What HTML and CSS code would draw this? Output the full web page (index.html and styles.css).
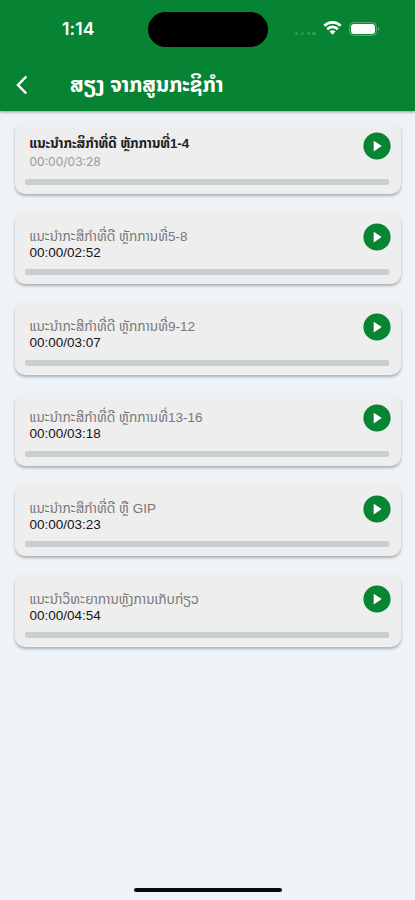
FILE: index.html
```html
<!DOCTYPE html>
<html lang="lo">
<head>
<meta charset="utf-8">
<title>ສຽງ ຈາກສູນກະຊິກຳ</title>
<link rel="stylesheet" href="styles.css">
</head>
<body>
<header class="top">
  <div class="status">
    <span class="clock">1:14</span>
    <span class="island"></span>
    <span class="signal"><i></i><i></i><i></i><i></i></span>
    <svg class="wifi" width="19" height="14" viewBox="0 0 20 15"><g fill="none" stroke="#fff" stroke-width="3"><path d="M1.2 5.2C6.2.3 13.8.3 18.8 5.2"/><path d="M4.3 8.8c3.2-3.2 8.2-3.2 11.4 0"/></g><path d="M6.8 11.3c1.8-1.8 4.6-1.8 6.4 0L10 14.8z" fill="#fff"/></svg>
    <svg class="battery" width="31" height="14" viewBox="0 0 31 14"><rect x=".6" y=".6" width="26.8" height="12.8" rx="4" fill="none" stroke="#5fb075" stroke-width="1"/><rect x="2" y="2" width="24" height="10" rx="3" fill="#fff"/><path d="M29 5q2 2 0 4z" fill="#7fc18f"/></svg>
  </div>
  <div class="nav">
    <svg class="back" width="12" height="20" viewBox="0 0 12 20"><path d="M10.3 1.5 2 10l8.3 8.5" fill="none" stroke="#fff" stroke-width="2.5"/></svg>
    <h1 class="title">ສຽງ ຈາກສູນກະຊິກຳ</h1>
  </div>
</header>
<main class="list">
  <article class="card active"><div class="row"><div><h2 class="name">ແນະນຳກະສິກຳທີ່ດີ ຫຼັກການທີ່1-4</h2><p class="time">00:00/03:28</p></div><svg class="play" width="28" height="28" viewBox="0 0 28 28"><circle cx="14" cy="14" r="13.6"/><path d="M10.7 8.8v10.6l8-5.3z"/></svg></div><div class="track"></div></article>
  <article class="card"><div class="row"><div><h2 class="name">ແນະນຳກະສິກຳທີ່ດີ ຫຼັກການທີ່5-8</h2><p class="time">00:00/02:52</p></div><svg class="play" width="28" height="28" viewBox="0 0 28 28"><circle cx="14" cy="14" r="13.6"/><path d="M10.7 8.8v10.6l8-5.3z"/></svg></div><div class="track"></div></article>
  <article class="card"><div class="row"><div><h2 class="name">ແນະນຳກະສິກຳທີ່ດີ ຫຼັກການທີ່9-12</h2><p class="time">00:00/03:07</p></div><svg class="play" width="28" height="28" viewBox="0 0 28 28"><circle cx="14" cy="14" r="13.6"/><path d="M10.7 8.8v10.6l8-5.3z"/></svg></div><div class="track"></div></article>
  <article class="card"><div class="row"><div><h2 class="name">ແນະນຳກະສິກຳທີ່ດີ ຫຼັກການທີ່13-16</h2><p class="time">00:00/03:18</p></div><svg class="play" width="28" height="28" viewBox="0 0 28 28"><circle cx="14" cy="14" r="13.6"/><path d="M10.7 8.8v10.6l8-5.3z"/></svg></div><div class="track"></div></article>
  <article class="card"><div class="row"><div><h2 class="name">ແນະນຳກະສິກຳທີ່ດີ ຫຼື GIP</h2><p class="time">00:00/03:23</p></div><svg class="play" width="28" height="28" viewBox="0 0 28 28"><circle cx="14" cy="14" r="13.6"/><path d="M10.7 8.8v10.6l8-5.3z"/></svg></div><div class="track"></div></article>
  <article class="card"><div class="row"><div><h2 class="name">ແນະນຳວິທະຍາການຫຼັງການເກັບກ່ຽວ</h2><p class="time">00:00/04:54</p></div><svg class="play" width="28" height="28" viewBox="0 0 28 28"><circle cx="14" cy="14" r="13.6"/><path d="M10.7 8.8v10.6l8-5.3z"/></svg></div><div class="track"></div></article>
</main>
<footer class="home"><span></span></footer>
</body>
</html>
```
FILE: styles.css
```css
* { box-sizing: border-box; }
body {
  margin: 0;
  height: 900px;
  display: flex;
  flex-direction: column;
  overflow: hidden;
  background: #eef3f7;
  font-family: "Liberation Sans", "Noto Sans Lao", "DejaVu Sans", sans-serif;
}
h1, h2, p { margin: 0; white-space: nowrap; }
svg { display: block; flex: none; }
.top {
  flex: none;
  height: 111px;
  background: #068434;
  color: #fff;
  box-shadow: 0 1px 3px rgba(0, 0, 0, .4);
}
.status { display: flex; align-items: center; height: 58px; padding-left: 62px; }
.clock { width: 86px; font: 600 17.5px/20px Inter, sans-serif; letter-spacing: .1px; }
.island { width: 120px; height: 35px; border-radius: 18px; background: #000; }
.signal { display: flex; gap: 2.5px; margin: 9px 0 0 27px; }
.signal i { width: 3.3px; height: 3.3px; border-radius: 50%; background: #36994f; }
.wifi { margin: -2px 0 0 7.5px; }
.battery { margin: -1px 0 0 7px; }
.nav { display: flex; align-items: center; height: 53px; padding-left: 16px; }
.title { margin-left: 42px; font-size: 21px; line-height: 30px; }
.list { display: flex; flex-direction: column; gap: 17.7px; padding: 9.5px 14px 0 15px; }
.card {
  height: 73px;
  padding: 12px 12px 0 10px;
  border-radius: 10px;
  background: #eee;
  box-shadow: 0 2px 3px rgba(0, 0, 0, .28);
}
.row { display: flex; justify-content: space-between; height: 46px; padding-left: 4.5px; }
.row > div { padding-top: 4.6px; }
.play { margin: -.6px -1.5px 0 0; }
.play circle { fill: #078532; }
.play path { fill: #fff; }
.name { height: 17px; font-size: 13.5px; line-height: 17px; font-weight: 400; color: #777; }
.time { font-size: 13.5px; line-height: 16px; color: #151515; }
.active .row > div { padding-top: 2px; }
.active .name { font-size: 13.4px; font-weight: 700; color: #222; }
.active .time { margin-top: 2px; font: 12px/16px Inter, sans-serif; color: #999; }
.track { height: 6px; border-radius: 2px; background: #c8cfd3; }
.home { display: flex; justify-content: center; margin-top: auto; padding-bottom: 8px; }
.home span { width: 148px; height: 4px; border-radius: 2px; background: #050a0a; }
```
